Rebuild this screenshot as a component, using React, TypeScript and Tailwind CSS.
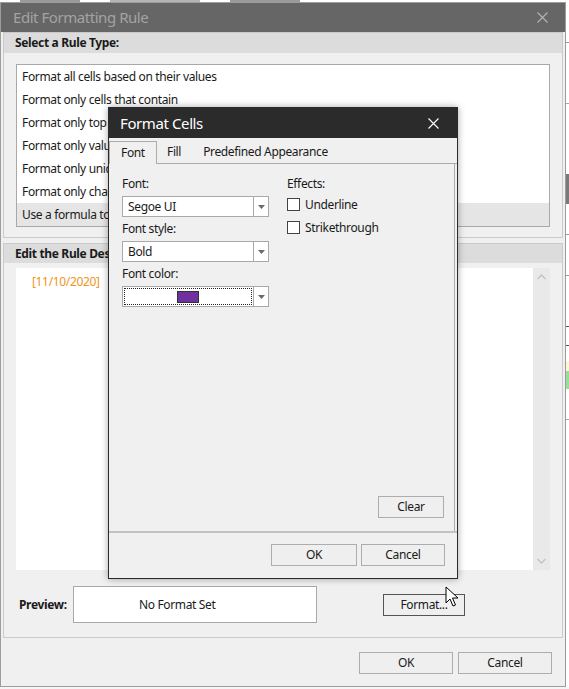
import React from 'react'

const RULE_TYPES = [
  'Format all cells based on their values',
  'Format only cells that contain',
  'Format only top or bottom ranked values',
  'Format only values that are above or below average',
  'Format only unique or duplicate values',
  'Format only changing values',
  'Use a formula to determine which cells to format',
]

function CloseIcon({ className }: { className?: string }) {
  return (
    <svg width="11" height="11" viewBox="0 0 11 11" className={className}>
      <path d="M0.5 0.5 L10.5 10.5 M10.5 0.5 L0.5 10.5" stroke="currentColor" strokeWidth="1.1" fill="none" />
    </svg>
  )
}

function Chevron({ up }: { up?: boolean }) {
  return (
    <svg width="9" height="6" viewBox="0 0 9 6">
      <path d={up ? 'M0.5 5 L4.5 1 L8.5 5' : 'M0.5 1 L4.5 5 L8.5 1'} stroke="#c3c3c3" strokeWidth="1.4" fill="none" />
    </svg>
  )
}

function Btn({ children, className = '' }: { children: React.ReactNode; className?: string }) {
  return (
    <button
      type="button"
      className={`flex h-[22px] items-center justify-center border border-[#adadad] bg-[#efefef] text-[#1a1a1a] ${className}`}
    >
      {children}
    </button>
  )
}

function Combo({ children, focus = false }: { children: React.ReactNode; focus?: boolean }) {
  return (
    <div className="flex h-[21px] w-[147px] border border-[#a9a9a9] bg-white">
      {focus ? (
        <div className="flex flex-1 p-[1px]">
          <div className="flex flex-1 items-center justify-center border border-dotted border-[#222]">{children}</div>
        </div>
      ) : (
        <div className="flex flex-1 items-center pl-[5px]">{children}</div>
      )}
      <div className="flex w-[15px] items-center justify-center border-l border-[#a9a9a9]">
        <svg width="7" height="4" viewBox="0 0 7 4">
          <path d="M0 0 H7 L3.5 4 Z" fill="#6a6a6a" />
        </svg>
      </div>
    </div>
  )
}

function Checkbox({ label }: { label: string }) {
  return (
    <div className="flex h-[23px] items-center gap-[5px]">
      <div className="h-[13px] w-[13px] border border-[#444] bg-white" />
      <span>{label}</span>
    </div>
  )
}

function FormatCells() {
  return (
    <div className="absolute left-[108px] top-[107px] flex h-[472px] w-[350px] flex-col border border-[#2b2b2b] bg-[#f0f0f0] shadow-[0_0_7px_rgba(0,0,0,0.35)]">
      <div className="flex h-[30px] shrink-0 items-center justify-between bg-[#2b2b2b] pl-[11px] pr-[18px]">
        <span className="text-[15px] tracking-[-0.4px] text-white">Format Cells</span>
        <CloseIcon className="text-white" />
      </div>

      <div className="flex h-[26px] shrink-0 items-end">
        <div className="flex h-[23px] w-[48px] items-center border border-b-0 border-[#acacac] pl-[11px]">Font</div>
        <div className="flex h-[23px] items-center border-b border-[#acacac] px-[10px]">Fill</div>
        <div className="flex h-[23px] flex-1 items-center border-b border-[#acacac] pl-[12px]">Predefined Appearance</div>
        <div className="h-[23px] w-[2px] border-b border-[#acacac]" />
      </div>

      <div className="mr-[2px] flex min-h-0 flex-1 flex-col border-r border-[#acacac] pl-[13px] pr-[10px] pt-[12px] pb-[13px]">
        <div className="flex">
          <div className="flex w-[165px] flex-col">
            <div className="h-[16px] leading-[16px]">Font:</div>
            <div className="mt-[4px]"><Combo>Segoe UI</Combo></div>
            <div className="mt-[4px] h-[16px] leading-[16px]">Font style:</div>
            <div className="mt-[4px]"><Combo>Bold</Combo></div>
            <div className="mt-[4px] h-[16px] leading-[16px]">Font color:</div>
            <div className="mt-[4px]">
              <Combo focus>
                <div className="h-[12px] w-[22px] border border-[#333] bg-[#7030a0]" />
              </Combo>
            </div>
          </div>
          <div className="flex flex-col">
            <div className="h-[16px] leading-[16px]">Effects:</div>
            <div className="mt-[1px]">
              <Checkbox label="Underline" />
              <Checkbox label="Strikethrough" />
            </div>
          </div>
        </div>
        <div className="mt-auto flex justify-end">
          <Btn className="w-[66px]">Clear</Btn>
        </div>
      </div>

      <div className="h-[2px] shrink-0 bg-[#c2c2c2]" />
      <div className="flex h-[45px] shrink-0 items-start justify-end gap-[4px] pr-[12px] pt-[11px]">
        <Btn className="w-[86px]">OK</Btn>
        <Btn className="w-[84px]">Cancel</Btn>
      </div>
    </div>
  )
}

function Cursor() {
  return (
    <svg className="absolute left-[445px] top-[586px]" width="14" height="22" viewBox="0 0 14 22">
      <path d="M1 1 L1 17 L5 13 L8 20 L10.5 19 L7.5 12 L13 12 Z" fill="white" stroke="black" strokeWidth="1" strokeLinejoin="round" />
    </svg>
  )
}

export default function App() {
  return (
    <div className="relative h-[689px] w-[569px] overflow-hidden bg-[#f5f5f5] font-['Noto_Sans','Liberation_Sans',sans-serif] text-[12px] tracking-[-0.35px] text-[#1a1a1a]">
      {/* app behind the dialog */}
      <div className="flex h-[2px] gap-[30px] bg-white pl-[20px]">
        <div className="h-[2px] w-[60px] bg-[#9a9a9a]" />
        <div className="h-[2px] w-[90px] bg-[#b5b5b5]" />
        <div className="h-[2px] w-[70px] bg-[#9a9a9a]" />
      </div>

      <div className="flex">
        <div className="flex h-[685px] w-[566px] flex-col border border-[#9c9c9c] bg-[#f0f0f0]">
          <div className="flex h-[29px] shrink-0 items-center justify-between bg-[#666666] pl-[12px] pr-[17px]">
            <span className="text-[15px] tracking-[-0.45px] text-[#a3a3a3]">Edit Formatting Rule</span>
            <CloseIcon className="text-[#b4b4b4]" />
          </div>

          {/* Select a Rule Type */}
          <div className="mx-[2px] flex h-[206px] shrink-0 flex-col border border-[#cacaca]">
            <div className="flex h-[20px] items-center bg-[#dcdcdc] pl-[11px] font-bold">Select a Rule Type:</div>
            <div className="mx-[12px] mt-[11px] flex h-[163px] flex-col border border-[#a9a9a9] bg-white">
              {RULE_TYPES.map((t, i) => (
                <div
                  key={t}
                  className={`flex h-[23px] items-center whitespace-nowrap pl-[5px] ${i === RULE_TYPES.length - 1 ? 'bg-[#e5e5e5]' : ''}`}
                >
                  {t}
                </div>
              ))}
            </div>
          </div>

          {/* Edit the Rule Description */}
          <div className="mx-[2px] mt-[5px] flex h-[395px] shrink-0 flex-col border border-[#cacaca]">
            <div className="flex h-[19px] items-center bg-[#dcdcdc] pl-[11px] font-bold">Edit the Rule Description:</div>
            <div className="mx-[12px] mt-[5px] flex h-[302px]">
              <div className="flex-1 bg-white pl-[16px] pt-[5px] text-[#f29320]">[11/10/2020]</div>
              <div className="flex w-[17px] flex-col items-center justify-between bg-[#e9e9e9] py-[6px]">
                <Chevron up />
                <Chevron />
              </div>
            </div>
            <div className="mt-[16px] flex h-[37px] items-center pl-[15px]">
              <span className="w-[54px] font-bold">Preview:</span>
              <div className="flex h-[37px] w-[244px] items-center border border-[#a9a9a9] bg-white pl-[65px]">
                No Format Set
              </div>
              <button
                type="button"
                className="ml-[66px] flex h-[22px] w-[82px] items-center justify-center border border-[#555] bg-[#efefef]"
              >
                Format...
              </button>
            </div>
          </div>

          <div className="mr-[13px] mt-[14px] flex justify-end gap-[5px]">
            <Btn className="w-[94px]">OK</Btn>
            <Btn className="w-[94px]">Cancel</Btn>
          </div>
        </div>

        {/* sliver of the sheet on the right */}
        <div className="flex flex-1 flex-col bg-white">
          <div className="mt-[40px] h-[1px] bg-[#999]" />
          <div className="mt-[60px] h-[1px] bg-[#aaa]" />
          <div className="mt-[70px] h-[30px] bg-[#7a7a7a]" />
          <div className="mt-[30px] h-[1px] bg-[#999]" />
          <div className="mt-[40px] h-[1px] bg-[#999]" />
          <div className="mt-[50px] h-[1px] bg-[#555]" />
          <div className="mt-[18px] h-[1px] bg-[#555]" />
          <div className="mt-[15px] h-[10px] bg-[#fff6d5]" />
          <div className="h-[18px] bg-[#98e098]" />
          <div className="mt-[30px] h-[1px] bg-[#aaa]" />
        </div>
      </div>

      <FormatCells />
      <Cursor />
    </div>
  )
}
